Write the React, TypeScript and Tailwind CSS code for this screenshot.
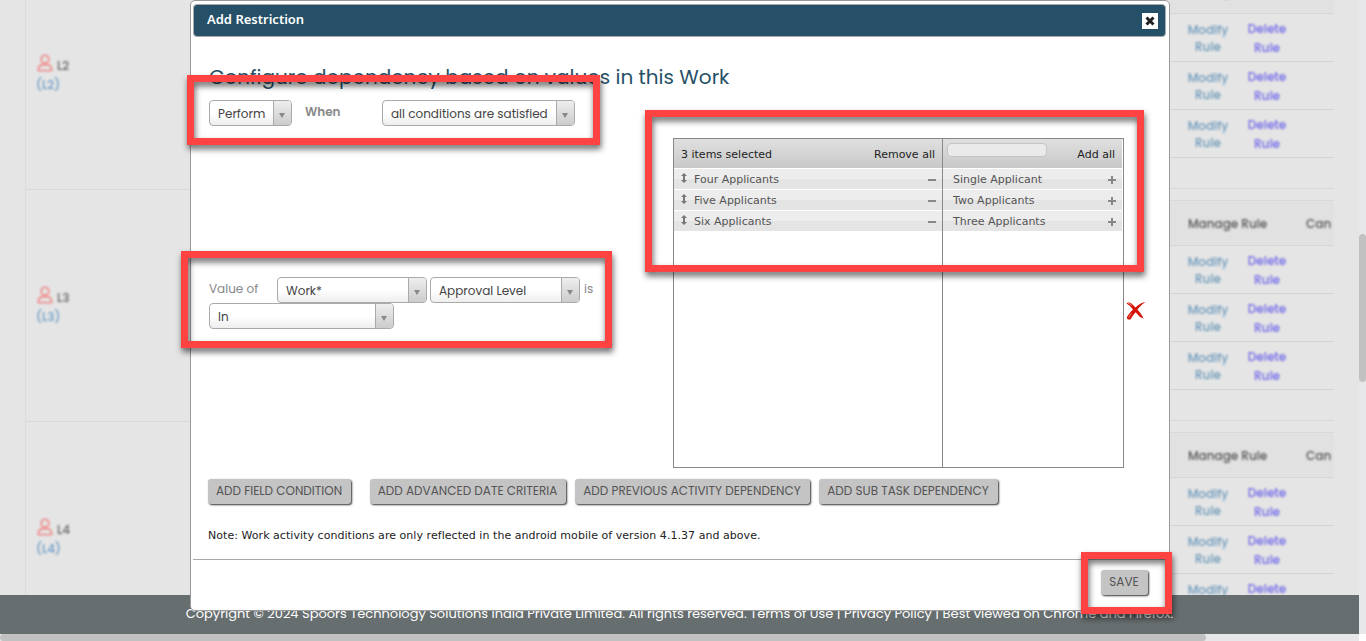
import React from 'react';

const POPPINS = "font-['Poppins','Inter',sans-serif]";
const VERDANA = "font-['Verdana','DejaVu_Sans',sans-serif]";

const LEVELS = ['L2', 'L3', 'L4'];
const SELECTED = ['Four Applicants', 'Five Applicants', 'Six Applicants'];
const AVAILABLE = ['Single Applicant', 'Two Applicants', 'Three Applicants'];

const ACTIONS = [
  { label: 'ADD FIELD CONDITION', className: 'w-[143px] mr-[19px]' },
  { label: 'ADD ADVANCED DATE CRITERIA', className: 'w-[196px] mr-[9px]' },
  { label: 'ADD PREVIOUS ACTIVITY DEPENDENCY', className: 'w-[235px] mr-[9px]' },
  { label: 'ADD SUB TASK DEPENDENCY', className: 'w-[179px]' },
];

const Select: React.FC<{ value: string; className: string }> = ({ value, className }) => (
  <div className={`flex h-[26px] shrink-0 overflow-hidden rounded-[4px] border border-[#aaa] bg-linear-to-b from-white from-50% to-[#eee] text-[12px] text-[#444] ${className}`}>
    <span className="flex-1 whitespace-nowrap pl-2 leading-[26px]">{value}</span>
    <span className="flex w-[18px] items-center border-l border-[#aaa] bg-linear-to-b from-[#eee] to-[#ccc] pl-[5px] pt-[4px]">
      <svg width="6" height="5" viewBox="0 0 6 5"><path d="M0 0h6L3 5z" fill="#888" /></svg>
    </span>
  </div>
);

const GreyButton: React.FC<{ label: string; className: string }> = ({ label, className }) => (
  <button className={`h-[25px] shrink-0 whitespace-nowrap rounded-[3px] bg-[#c4c4c4] pb-px pr-px text-center text-[12px] leading-6 text-[#555] shadow-[1px_1px_2px_#333] ${className}`}>
    {label}
  </button>
);

const PersonIcon: React.FC = () => (
  <svg width="16" height="18" viewBox="0 0 16 18" fill="none" stroke="#ee9292" strokeWidth="1.9">
    <circle cx="8" cy="5.3" r="3.9" />
    <path d="M1.400 16.600c0-4 2-5.900 4-5.900h5.200c2 0 4 1.900 4 5.900z" strokeLinejoin="round" />
  </svg>
);

const RuleSection: React.FC = () => (
  <div className="h-[232px] shrink-0">
    <div className="flex h-[46px] items-center border-y border-[#d8d8d8] bg-[#e1e1e1] text-[12px] font-medium text-[#555]">
      <span className="ml-[18px] w-[118px] pt-px blur-[0.8px]">Manage Rule</span>
      <span className="pt-px blur-[0.8px]">Can</span>
    </div>
    {[0, 1, 2].map((row) => (
      <div key={row} className="flex h-[48px] border-b border-[#d3d3d3] text-center text-[12px] font-medium">
        <span className="ml-[14px] w-12 pt-[7px] leading-[17px] text-[#6c9abb] blur-[0.8px]">Modify Rule</span>
        <span className="ml-[11px] w-12 pt-[5px] leading-[19px] text-[#6e68e8] blur-[0.8px]">Delete Rule</span>
      </div>
    ))}
    <div className="h-[31px] border-b border-[#d8d8d8]" />
  </div>
);

const BackgroundPage: React.FC = () => (
  <div className="flex h-full flex-col">
    <div className="flex h-[634px]">
      <div className="flex w-[1359px] flex-col">
        <div className="flex h-[595px] overflow-hidden bg-[#e5e5e5]">
          <div className="ml-[25px] flex w-[1145px] flex-col border-l border-[#dcdcdc]">
            <div className="-mt-[43px]">
              {LEVELS.map((level) => (
                <div key={level} className="h-[233px] not-first:h-[232px] border-b border-[#d8d8d8] pl-[11px] pt-[97px] not-first:pt-[96px] text-[12px]">
                  <div className="flex h-[22px] items-start gap-1 font-medium text-[#666] blur-[0.8px]">
                    <PersonIcon />
                    <span className="pt-[3px]">{level}</span>
                  </div>
                  <div className="-ml-px leading-[18px] font-medium text-[#6c9cc8] blur-[0.8px]">({level})</div>
                </div>
              ))}
            </div>
          </div>
          <div className="-mt-8 flex w-[164px] flex-col">
            <RuleSection />
            <RuleSection />
            <RuleSection />
          </div>
        </div>
        <footer className="flex h-[39px] items-center justify-center bg-[#676e6f] pb-[2px] text-[13px] text-white">
          <span className="whitespace-nowrap">
            Copyright © 2024 Spoors Technology Solutions India Private Limited. All rights reserved. Terms of Use | Privacy Policy | Best viewed on Chrome and Firefox.
          </span>
        </footer>
      </div>
      <div className="w-[7px] bg-[#e7e8ea] pt-[234px]">
        <div className="h-[148px] rounded-full bg-[#c1c1c1]" />
      </div>
    </div>
    <div className="h-[7px] w-[1359px] bg-[#e7e8ea]">
      <div className="h-full w-[1206px] rounded-full bg-[#c1c1c1]" />
    </div>
  </div>
);

const listHeader = 'mb-px flex h-[29px] items-center justify-between bg-linear-to-b from-[#e0e0e0] to-[#c8c8c8] pr-[7px] pt-[3px] text-[#222]';
const listRow = 'mb-px flex h-5 items-center bg-linear-to-b from-[#ededed] from-50% to-[#e4e4e4] to-50% text-[#555]';

const PickList: React.FC = () => (
  <div className={`mt-[38px] flex h-[330px] w-[451px] border border-[#888] text-[11px] ${VERDANA}`}>
    <div className="w-[269px] shrink-0 border-r border-[#888]">
      <div className={`pl-[7px] ${listHeader}`}>
        <span>3 items selected</span>
        <span>Remove all</span>
      </div>
      {SELECTED.map((item) => (
        <div key={item} className={listRow}>
          <svg className="mb-[3px] ml-[6px] mr-[6px]" width="8" height="10" viewBox="0 0 8 10"><path d="M4 0l3 3H5v4h2L4 10 1 7h2V3H1z" fill="#777" /></svg>
          <span className="flex-1 pt-[2px]">{item}</span>
          <span className="mr-[6px] mt-[2px] h-[2px] w-2 bg-[#888]" />
        </div>
      ))}
    </div>
    <div className="w-[180px] pr-px">
      <div className={`pl-1 ${listHeader}`}>
        <input className="mb-[10px] h-[14px] w-[100px] rounded-[4px] border border-[#c4c4c4] bg-[#eaeaea]" />
        <span>Add all</span>
      </div>
      {AVAILABLE.map((item) => (
        <div key={item} className={listRow}>
          <span className="flex-1 pl-[10px] pt-[2px]">{item}</span>
          <svg className="mr-[6px] mt-[2px]" width="8" height="8" viewBox="0 0 8 8"><path d="M3 0h2v3h3v2H5v3H3V5H0V3h3z" fill="#888" /></svg>
        </div>
      ))}
    </div>
  </div>
);

const RestrictionDialog: React.FC = () => (
  <div className="absolute left-[190px] top-0 flex h-[611px] w-[980px] flex-col rounded-[5px] border border-[#999] bg-white pl-[2px] pr-[3px] pt-[3px]">
    <div className="flex h-[33px] shrink-0 items-center justify-between rounded-[4px] border border-[#aaa] bg-[#255067] pl-[13px] pr-[7px]">
      <span className="pb-[2px] font-['Noto_Sans',sans-serif] text-[13px] font-semibold text-white">Add Restriction</span>
      <button className="flex h-4 w-4 items-center justify-center bg-white">
        <svg width="10" height="10" viewBox="0 0 10 10"><path d="M1.500 1.500l7 7m0-7l-7 7" stroke="#222" strokeWidth="3" /></svg>
      </button>
    </div>
    <h2 className="ml-4 mt-[25px] h-[38px] whitespace-nowrap text-[20px] leading-[30px] text-[#255067]">
      Configure dependency based on values in this Work
    </h2>
    <div className="flex h-[379px] pl-4">
      <div className="w-[464px] text-[12px] text-[#888]">
        <div className="flex h-[177px] items-start">
          <Select value="Perform" className="w-[83px]" />
          <span className="ml-[13px] w-[77px] pt-[3px] font-semibold">When</span>
          <Select value="all conditions are satisfied" className="w-[193px]" />
        </div>
        <div className="flex items-start">
          <span className="w-[68px] pt-[3px]">Value of</span>
          <Select value="Work*" className="w-[150px]" />
          <Select value="Approval Level" className="ml-[3px] w-[150px]" />
          <span className="pl-1 pt-[3px]">is</span>
        </div>
        <Select value="In" className="w-[185px]" />
      </div>
      <PickList />
      <svg className="ml-[2px] mt-[201px]" width="20" height="19" viewBox="0 0 20 19">
        <path d="M.500 2.500C3 0 5.500 2 9.500 6.500 12.500 3.500 15 1.800 19.500 1c-3 2-5.500 4.300-8 7.500 2.500 3 4.500 5.500 6 9-3-.5-5-3-7.800-6.300C7.500 13.500 6 15.500 4.500 18.500c-2.500.3-4-.5-3.500-2.500 1.500-2.800 3.500-5 6-7.500C5 6 3 3.800.500 2.500z" fill="#d4140a" />
        <path d="M2 2.300c1.500 0 2.500 1 4 2.500M2.800 16.500c.5-1.500 1.500-2.800 2.700-4" stroke="#f08a78" fill="none" />
      </svg>
    </div>
    <div className="ml-[15px] flex h-[45px] shrink-0">
      {ACTIONS.map((action) => (
        <GreyButton key={action.label} {...action} />
      ))}
    </div>
    <p className={`ml-[15px] h-[35px] whitespace-nowrap pt-[4px] text-[11px] leading-4 tracking-[0.045px] text-[#222] ${VERDANA}`}>
      Note: Work activity conditions are only reflected in the android mobile of version 4.1.37 and above.
    </p>
    <div className="flex justify-end border-t border-[#aaa] pr-[18px] pt-[10px]">
      <GreyButton label="SAVE" className="w-[47px]" />
    </div>
  </div>
);

const Highlight: React.FC<{ className: string }> = ({ className }) => (
  <div className={`pointer-events-none absolute border-[7px] border-[#ff4343] drop-shadow-[1px_4px_3px_rgba(0,0,0,0.6)] ${className}`} />
);

const App: React.FC = () => (
  <div className={`relative h-[641px] w-[1366px] overflow-hidden bg-white ${POPPINS}`}>
    <BackgroundPage />
    <RestrictionDialog />
    <Highlight className="left-[187px] top-[75px] h-[70px] w-[413px]" />
    <Highlight className="left-[645px] top-[110px] h-[162px] w-[499px]" />
    <Highlight className="left-[181px] top-[251px] h-[97px] w-[431px]" />
    <Highlight className="left-[1081px] top-[552px] h-[62px] w-[91px]" />
  </div>
);

export default App;
